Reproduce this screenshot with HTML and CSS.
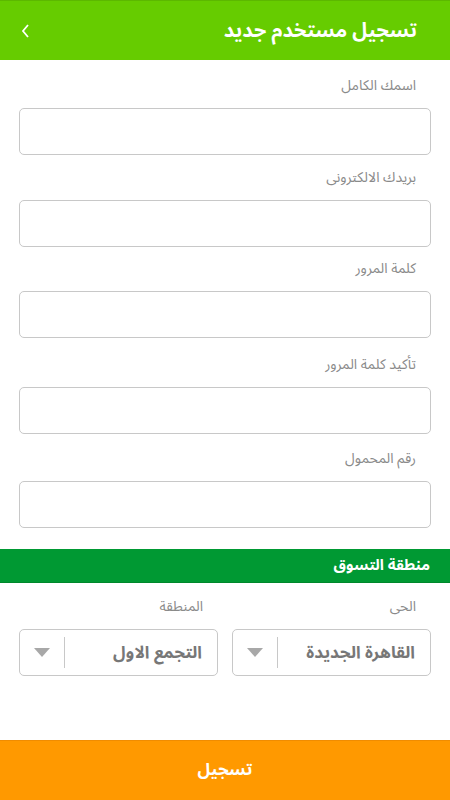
FILE: index.html
```html
<!DOCTYPE html>
<html lang="ar" dir="rtl">
<head>
    <meta charset="UTF-8">
    <meta name="viewport" content="width=device-width, initial-scale=1.0">
    <title>تسجيل مستخدم جديد</title>
    <link rel="stylesheet" href="styles.css">
</head>
<body>
    <div class="screen">
        <div class="topbar">
            <h1 class="title">تسجيل مستخدم جديد</h1>
            <span class="back">
                <svg width="10" height="16" viewBox="0 0 10 16"><path d="M8 2 L3 8 L8 14" fill="none" stroke="#fff" stroke-width="1.8"/></svg>
            </span>
        </div>

        <div class="form">
            <div class="field f1">
                <label>اسمك الكامل</label>
                <div class="input"></div>
            </div>
            <div class="field">
                <label>بريدك الالكترونى</label>
                <div class="input"></div>
            </div>
            <div class="field f3">
                <label>كلمة المرور</label>
                <div class="input"></div>
            </div>
            <div class="field f4">
                <label>تأكيد كلمة المرور</label>
                <div class="input"></div>
            </div>
            <div class="field">
                <label>رقم المحمول</label>
                <div class="input"></div>
            </div>
        </div>

        <div class="section">منطقة التسوق</div>

        <div class="area">
            <div class="pick">
                <label>الحى</label>
                <div class="select">
                    <span class="value">القاهرة الجديدة</span>
                    <span class="arrow"></span>
                </div>
            </div>
            <div class="pick">
                <label>المنطقة</label>
                <div class="select">
                    <span class="value">التجمع الاول</span>
                    <span class="arrow"></span>
                </div>
            </div>
        </div>

        <div class="submit">تسجيل</div>
    </div>
</body>
</html>
```

FILE: styles.css
```css
body {
    margin: 0;
    font-family: "Noto Sans Arabic", "DejaVu Sans", sans-serif;
    background: #fff;
}

.screen {
    width: 450px;
    height: 800px;
    display: flex;
    flex-direction: column;
    overflow: hidden;
}

.topbar {
    height: 60px;
    flex-shrink: 0;
    background: #66cc00;
    border-top: 1px solid #5cb800;
    box-sizing: border-box;
    display: flex;
    align-items: center;
    justify-content: space-between;
    padding: 0 33px 0 20px;
}

.title {
    margin: 0;
    color: #fff;
    font-size: 20px;
    font-weight: bold;
}

.back {
    display: flex;
    align-items: center;
}

.form {
    padding: 16px 19px 0;
}

.field label,
.pick label {
    display: block;
    color: #8a8a8a;
    font-size: 14px;
    padding-right: 15px;
    height: 20px;
    line-height: 20px;
}

.field {
    margin-bottom: 12px;
}

.field.f1 {
    margin-bottom: 13px;
}

.field.f3 {
    margin-bottom: 17px;
}

.field.f4 {
    margin-bottom: 15px;
}

.input {
    height: 47px;
    margin-top: 12px;
    border: 1px solid #c8c8c8;
    border-radius: 5px;
    box-sizing: border-box;
}

.section {
    margin-top: 9px;
    height: 34px;
    flex-shrink: 0;
    background: #009933;
    border-bottom: 1px solid #00882c;
    box-sizing: border-box;
    color: #fff;
    font-size: 15px;
    font-weight: bold;
    line-height: 33px;
    padding-right: 20px;
}

.area {
    display: flex;
    gap: 14px;
    padding: 14px 19px 0;
}

.pick {
    flex: 1;
}

.select {
    height: 47px;
    margin-top: 12px;
    border: 1px solid #c8c8c8;
    border-radius: 5px;
    box-sizing: border-box;
    display: flex;
    align-items: center;
    padding-right: 15px;
}

.value {
    flex: 1;
    color: #777;
    font-size: 17px;
    font-weight: bold;
}

.arrow {
    width: 44px;
    height: 31px;
    border-right: 1px solid #c8c8c8;
    display: flex;
    align-items: center;
    justify-content: center;
}

.arrow::before {
    content: "";
    border-left: 8px solid transparent;
    border-right: 8px solid transparent;
    border-top: 9px solid #a8a8a8;
}

.submit {
    margin-top: auto;
    height: 60px;
    flex-shrink: 0;
    background: #ff9900;
    border-top: 1px solid #f08c00;
    box-sizing: border-box;
    color: #fff;
    font-size: 17px;
    font-weight: bold;
    text-align: center;
    line-height: 58px;
}
```
